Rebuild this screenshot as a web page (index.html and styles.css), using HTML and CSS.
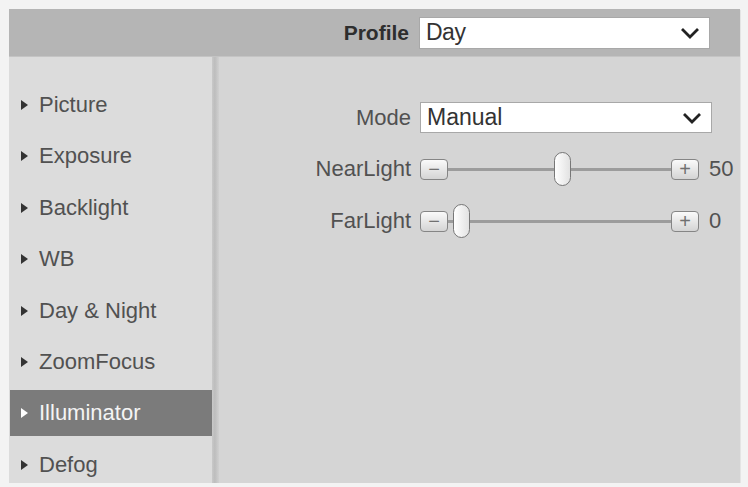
FILE: index.html
```html
<!DOCTYPE html>
<html>
<head>
<meta charset="utf-8">
<link rel="stylesheet" href="styles.css">
</head>
<body>
<div class="frame">
  <div class="header">
    <span class="hlabel">Profile</span>
    <div class="select sel-profile">
      <span class="sel-text">Day</span>
      <svg class="chev" width="20" height="12" viewBox="0 0 20 12"><polyline points="2,2 10,10 18,2" fill="none" stroke="#222" stroke-width="2.8"/></svg>
    </div>
  </div>
  <div class="main">
    <div class="sidebar">
      <div class="item"><span class="tri"></span>Picture</div>
      <div class="item"><span class="tri"></span>Exposure</div>
      <div class="item"><span class="tri"></span>Backlight</div>
      <div class="item"><span class="tri"></span>WB</div>
      <div class="item"><span class="tri"></span>Day &amp; Night</div>
      <div class="item"><span class="tri"></span>ZoomFocus</div>
      <div class="item active"><span class="tri"></span>Illuminator</div>
      <div class="item"><span class="tri"></span>Defog</div>
    </div>
    <div class="shadow"></div>
    <div class="content">
      <div class="row row-mode">
        <span class="label">Mode</span>
        <div class="select sel-mode">
          <span class="sel-text">Manual</span>
          <svg class="chev" width="20" height="12" viewBox="0 0 20 12"><polyline points="2,2 10,10 18,2" fill="none" stroke="#222" stroke-width="2.8"/></svg>
        </div>
      </div>
      <div class="row row-slider">
        <span class="label">NearLight</span>
        <div class="slider">
          <span class="btn">&minus;</span>
          <div class="track"><span class="thumb" style="left: 106px"></span></div>
          <span class="btn">+</span>
        </div>
        <span class="val">50</span>
      </div>
      <div class="row row-slider row-far">
        <span class="label">FarLight</span>
        <div class="slider">
          <span class="btn">&minus;</span>
          <div class="track"><span class="thumb" style="left: 5px"></span></div>
          <span class="btn">+</span>
        </div>
        <span class="val">0</span>
      </div>
    </div>
  </div>
</div>
</body>
</html>
```

FILE: styles.css
```css
html, body {
  margin: 0;
  padding: 0;
  background: #f3f3f3;
  font-family: "Liberation Sans", Arial, sans-serif;
}
body {
  padding: 9px 0 0 9px;
}
.frame {
  width: 731px;
  height: 474px;
  display: flex;
  flex-direction: column;
  background: #d5d5d5;
  box-shadow: 1px 1px 0 #e4e4e4;
}
.header {
  height: 48px;
  flex: none;
  background: #b5b5b5;
  display: flex;
  align-items: center;
  justify-content: flex-end;
  padding-right: 30px;
  box-sizing: border-box;
  border-bottom: 1px solid #c4c4c4;
}
.hlabel {
  font-weight: bold;
  font-size: 21px;
  color: #2e2e2e;
  margin-right: 10px;
}
.select {
  background: #fff;
  border: 1px solid #a8a8a8;
  box-sizing: border-box;
  display: flex;
  align-items: center;
  justify-content: space-between;
  padding: 0 9px 0 6px;
}
.sel-profile {
  width: 291px;
  height: 32px;
}
.sel-text {
  font-size: 23px;
  color: #333;
}
.sel-profile .sel-text {
  letter-spacing: -0.5px;
}
.main {
  flex: 1;
  display: flex;
}
.sidebar {
  width: 203px;
  background: #dcdcdc;
  padding-top: 25px;
  box-sizing: border-box;
  display: flex;
  flex-direction: column;
  gap: 5.4px;
}
.shadow {
  width: 7px;
  background: linear-gradient(to right, #c9c9c9, #bdbdbd 40%, #d0d0d0);
}
.item {
  height: 46px;
  flex: none;
  display: flex;
  align-items: center;
  font-size: 22px;
  color: #515151;
  padding-left: 12px;
}
.item.active {
  background: #7b7b7b;
  color: #f4f4f4;
  margin-left: 1px;
  padding-left: 11px;
}
.tri {
  width: 0;
  height: 0;
  border-top: 5px solid transparent;
  border-bottom: 5px solid transparent;
  border-left: 7px solid #333;
  margin-right: 11px;
}
.item.active .tri {
  border-left-color: #fff;
}
.content {
  flex: 1;
  padding-top: 45px;
  box-sizing: border-box;
  display: flex;
  flex-direction: column;
}
.row {
  display: flex;
  align-items: center;
}
.label {
  width: 192px;
  text-align: right;
  margin-right: 9px;
  font-size: 22px;
  color: #515151;
}
.sel-mode {
  width: 292px;
  height: 31px;
}
.row-slider {
  margin-top: 18px;
  height: 36px;
}
.row-far {
  margin-top: 16px;
}
.slider {
  display: flex;
  align-items: center;
  width: 279px;
}
.btn {
  width: 28px;
  height: 21px;
  box-sizing: border-box;
  border: 1.5px solid #858585;
  border-radius: 4px;
  background: linear-gradient(#fafafa, #d4d4d4);
  display: flex;
  align-items: center;
  justify-content: center;
  font-size: 20px;
  line-height: 1;
  color: #707070;
  flex: none;
}
.track {
  flex: 1;
  height: 3px;
  background: #9c9c9c;
  position: relative;
}
.thumb {
  position: absolute;
  top: -16px;
  width: 17px;
  height: 34px;
  box-sizing: border-box;
  border: 1.5px solid #777;
  border-radius: 9px;
  background: linear-gradient(to right, #ffffff, #e2e2e2);
}
.val {
  margin-left: 10px;
  font-size: 22px;
  color: #515151;
}
```
